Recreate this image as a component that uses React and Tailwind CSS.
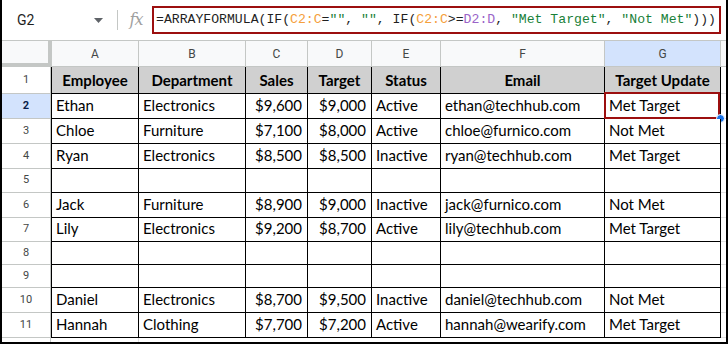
import React from 'react';

const cols = [
  { letter: 'A', w: 'w-[87px]', cw: 'w-[88px] border-l', align: 'justify-start pl-[4px]' },
  { letter: 'B', w: 'w-[107px]', cw: 'w-[107px]', align: 'justify-start pl-[4px]' },
  { letter: 'C', w: 'w-[62px]', cw: 'w-[62px]', align: 'justify-end pr-[5px]' },
  { letter: 'D', w: 'w-[64px]', cw: 'w-[64px]', align: 'justify-end pr-[5px]' },
  { letter: 'E', w: 'w-[69px]', cw: 'w-[69px]', align: 'justify-start pl-[4px]' },
  { letter: 'F', w: 'w-[164px]', cw: 'w-[164px]', align: 'justify-start pl-[4px]' },
  { letter: 'G', w: 'w-[116px]', cw: 'w-[116px]', align: 'justify-start pl-[4px]' },
];

const rows = [
  { n: 1, h: 'h-[27px]', cells: ['Employee', 'Department', 'Sales', 'Target', 'Status', 'Email', 'Target Update'] },
  { n: 2, h: 'h-[25px]', cells: ['Ethan', 'Electronics', '$9,600', '$9,000', 'Active', 'ethan@techhub.com', 'Met Target'] },
  { n: 3, h: 'h-[25px]', cells: ['Chloe', 'Furniture', '$7,100', '$8,000', 'Active', 'chloe@furnico.com', 'Not Met'] },
  { n: 4, h: 'h-[25px]', cells: ['Ryan', 'Electronics', '$8,500', '$8,500', 'Inactive', 'ryan@techhub.com', 'Met Target'] },
  { n: 5, h: 'h-[24px]', cells: ['', '', '', '', '', '', ''] },
  { n: 6, h: 'h-[25px]', cells: ['Jack', 'Furniture', '$8,900', '$9,000', 'Inactive', 'jack@furnico.com', 'Not Met'] },
  { n: 7, h: 'h-[24px]', cells: ['Lily', 'Electronics', '$9,200', '$8,700', 'Active', 'lily@techhub.com', 'Met Target'] },
  { n: 8, h: 'h-[23px]', cells: ['', '', '', '', '', '', ''] },
  { n: 9, h: 'h-[23px]', cells: ['', '', '', '', '', '', ''] },
  { n: 10, h: 'h-[25px]', cells: ['Daniel', 'Electronics', '$8,700', '$9,500', 'Inactive', 'daniel@techhub.com', 'Not Met'] },
  { n: 11, h: 'h-[25px]', cells: ['Hannah', 'Clothing', '$7,700', '$7,200', 'Active', 'hannah@wearify.com', 'Met Target'] },
];

// formula pieces: [text, colour class]
const formula = [
  ['=ARRAYFORMULA(IF(', ''],
  ['C2:C', 'text-[#f5a03c]'],
  ['=', ''],
  ['""', 'text-[#188038]'],
  [', ', ''],
  ['""', 'text-[#188038]'],
  [', IF(', ''],
  ['C2:C', 'text-[#f5a03c]'],
  ['>=', ''],
  ['D2:D', 'text-[#9a63c8]'],
  [', ', ''],
  ['"Met Target"', 'text-[#188038]'],
  [', ', ''],
  ['"Not Met"', 'text-[#188038]'],
  [')))', ''],
];

const FormulaBar = () => (
  <div className="flex items-center h-[41px] border-b border-[#c4c7c5] bg-white">
    <div className="flex items-center w-[115px] h-full pl-[15px] pr-[14px]">
      <span className="text-[14px] text-[#1f1f1f]" style={{ fontFamily: 'Roboto, sans-serif' }}>G2</span>
      <svg className="ml-auto" width="9" height="5" viewBox="0 0 9 5">
        <path d="M0 0 L9 0 L4.5 5 Z" fill="#5f6368" />
      </svg>
    </div>
    <div className="w-px h-[20px] bg-[#c4c7c5]" />
    <div className="w-[34px] flex justify-center pl-[2px]">
      <span className="italic text-[16px] text-[#a0a0a0] tracking-[-1px]" style={{ fontFamily: '"DejaVu Serif", serif' }}>fx</span>
    </div>
    <div
      className="w-[569px] h-[28px] border-2 border-[#9c0f0f] flex items-center pl-[2px] text-[13.15px] text-[#1f1f1f] whitespace-pre"
      style={{ fontFamily: '"Liberation Mono", monospace' }}
    >
      {formula.map(([t, c], i) => (
        <span key={i} className={c}>{t}</span>
      ))}
    </div>
  </div>
);

const ColumnHeaders = () => (
  <div className="flex h-[26px]" style={{ fontFamily: 'Roboto, sans-serif' }}>
    <div className="w-[50px] bg-[#f8f9fa] border-r-4 border-b-4 border-[#c4c7c5]" />
    {cols.map((c) => (
      <div
        key={c.letter}
        className={`${c.w} flex items-center justify-center border-r border-b border-[#c4c7c5] text-[12px] text-[#444746] ${
          c.letter === 'G' ? 'bg-[#d3e3fd]' : 'bg-[#f8f9fa]'
        }`}
      >
        {c.letter}
      </div>
    ))}
    <div className="flex-1 bg-[#f8f9fa] border-b border-[#c4c7c5]" />
  </div>
);

const Row = ({ row }) => {
  const header = row.n === 1;
  const selected = row.n === 2;
  return (
    <div className={`flex ${row.h}`}>
      <div
        className={`w-[49px] flex items-center justify-center border-r border-b border-[#c4c7c5] text-[11px] ${
          selected ? 'bg-[#d3e3fd] font-bold text-[#0b1f4b]' : 'bg-white text-[#444746]'
        }`}
        style={{ fontFamily: 'Roboto, sans-serif' }}
      >
        {row.n}
      </div>
      {cols.map((c, i) => (
        <div
          key={c.letter}
          className={`${c.cw} relative flex items-end pb-[2px] border-r border-b border-black text-[15px] text-black whitespace-nowrap ${
            header ? 'bg-[#d0d0d0] font-bold justify-center' : `bg-white ${c.align}`
          }`}
          style={{ fontFamily: 'Lato, sans-serif' }}
        >
          {row.cells[i]}
          {selected && c.letter === 'G' && (
            <>
              <div className="absolute -left-px -top-[2px] w-[116px] h-[27px] border-2 border-[#9c0f0f]" />
              <div className="absolute -right-[5px] -bottom-[5px] w-[9px] h-[9px] rounded-full bg-[#1a73e8] border border-white" />
            </>
          )}
        </div>
      ))}
      <div className="flex-1 border-b border-[#e1e1e1] bg-white" />
    </div>
  );
};

export default function App() {
  return (
    <div className="w-[728px] h-[344px] overflow-hidden bg-white border-l-2 border-r-2 border-b-2 border-black flex flex-col">
      <FormulaBar />
      <ColumnHeaders />
      {rows.map((r) => (
        <Row key={r.n} row={r} />
      ))}
      <div className="flex flex-1">
        <div className="w-[49px] border-r border-[#c4c7c5]" />
        <div className="w-[88px] border-r border-[#e1e1e1]" />
      </div>
    </div>
  );
}
